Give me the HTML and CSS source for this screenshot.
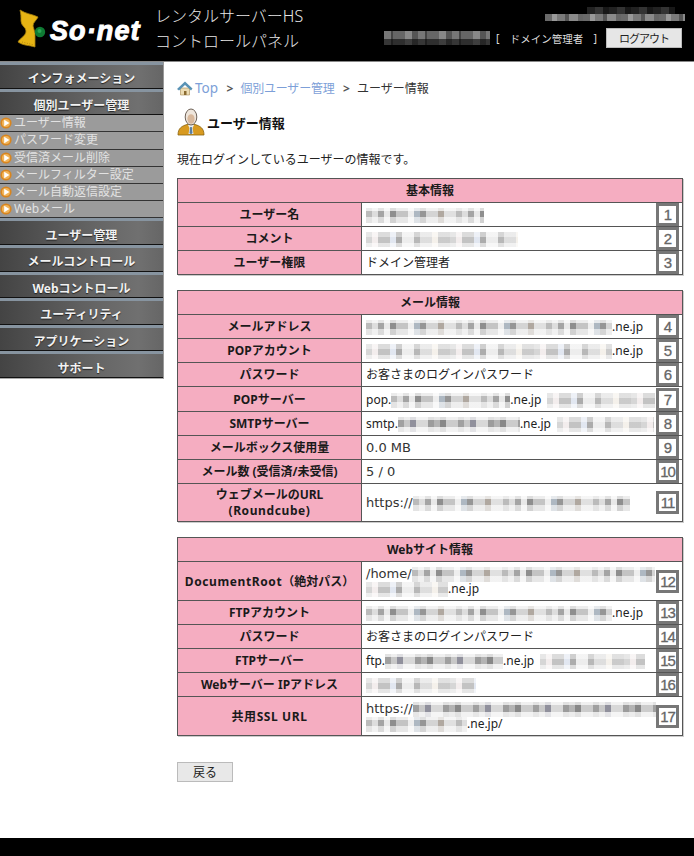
FILE: index.html
```html
<!DOCTYPE html>
<html lang="ja">
<head>
<meta charset="utf-8">
<title>ユーザー情報</title>
<link rel="stylesheet" href="styles.css">
</head>
<body>
<svg class="defs" width="0" height="0" aria-hidden="true">
  <symbol id="bullet" viewBox="0 0 12 12">
    <circle cx="6" cy="6" r="5.6" fill="#d9851e"/>
    <circle cx="6" cy="6" r="4" fill="#f0b45a"/>
    <path d="M4.2 2.8 9.400 6 4.200 9.200Z" fill="#fff"/>
  </symbol>
</svg>
<div class="page">
  <header class="header">
    <div class="logo">
      <svg class="logo-mark" width="48" height="48" viewBox="0 0 48 48">
        <path d="M3 1 C9 5 15 5 21 8 C20 11 16 13 16 17 L18 24 L18 38 C12 36 7 37 1 33 C3 29 9 27 9 22 C9 18 4 17 4 12 C4 8 4 5 3 1Z" fill="#e6b414" stroke="#a8820e" stroke-width=".8"/>
        <path d="M5 33 C9 34 13 35 17 36" fill="none" stroke="#b58a10" stroke-width="1" stroke-dasharray="1 1.500"/>
        <circle cx="23" cy="23" r="5.200" fill="#0f7a33"/>
        <circle cx="22.500" cy="22" r="2" fill="#2aa554"/>
      </svg>
      <span class="logo-text">So·net</span>
    </div>
    <div class="product">
      <div>レンタルサーバーHS</div>
      <div>コントロールパネル</div>
    </div>
    <div class="account">
      <div class="hdr-mosaic-top">
        <span class="hm hm-a"></span>
        <span class="hm hm-b"></span>
      </div>
      <div class="account-row">
        <span class="hm hm-c"></span>
        <span class="role"><span>[</span><span>ドメイン管理者</span><span>]</span></span>
        <button class="logout" type="button">ログアウト</button>
      </div>
    </div>
  </header>

  <div class="body-row">
    <nav class="sidebar">
      <a class="nav-head">インフォメーション</a>
      <a class="nav-head">個別ユーザー管理</a>
      <a class="nav-sub"><svg class="bullet"><use href="#bullet"/></svg>ユーザー情報</a>
      <a class="nav-sub"><svg class="bullet"><use href="#bullet"/></svg>パスワード変更</a>
      <a class="nav-sub"><svg class="bullet"><use href="#bullet"/></svg>受信済メール削除</a>
      <a class="nav-sub"><svg class="bullet"><use href="#bullet"/></svg>メールフィルター設定</a>
      <a class="nav-sub"><svg class="bullet"><use href="#bullet"/></svg>メール自動返信設定</a>
      <a class="nav-sub"><svg class="bullet"><use href="#bullet"/></svg>Webメール</a>
      <a class="nav-head">ユーザー管理</a>
      <a class="nav-head">メールコントロール</a>
      <a class="nav-head">Webコントロール</a>
      <a class="nav-head">ユーティリティ</a>
      <a class="nav-head">アプリケーション</a>
      <a class="nav-head">サポート</a>
    </nav>

    <main class="content">
      <div class="crumbs">
        <svg class="home" width="16" height="15" viewBox="0 0 16 15">
          <path d="M3.500 7h9v7h-9Z" fill="#ecdcb4" stroke="#a88a50" stroke-width=".6"/>
          <path d="M0 8 8 0.500 15.500 7.500 14 9.500 8 4 2 9.500Z" fill="#5a93b5"/>
          <path d="M7 10h2.500v4H7Z" fill="#8a6a30"/>
        </svg>
        <a class="crumb-link crumb-top">Top</a>
        <span class="sep">&gt;</span>
        <a class="crumb-link crumb-group">個別ユーザー管理</a>
        <span class="sep">&gt;</span>
        <span>ユーザー情報</span>
      </div>

      <div class="title-row">
        <svg width="28" height="28" viewBox="0 0 28 28">
          <path d="M1 27 C1 20 5 18 10 16.500 L18 16.500 C23 18 27 20 27 27Z" fill="#d89a20" stroke="#8a6410" stroke-width=".8"/>
          <path d="M11 17h6l-1.500 3 1 6h-5l1-6Z" fill="#e8eef2"/>
          <path d="M13.200 19h1.600l.7 6-1.500 1.500-1.500-1.500Z" fill="#5a7ea0"/>
          <ellipse cx="14" cy="9" rx="5.800" ry="8" fill="#efe6dc" stroke="#6e6258" stroke-width="1"/>
          <ellipse cx="14" cy="11" rx="3.600" ry="4.800" fill="#d8b89c"/>
        </svg>
        <h1 class="title">ユーザー情報</h1>
      </div>

      <p class="intro">現在ログインしているユーザーの情報です。</p>

      <table class="info">
        <colgroup><col class="col-label"><col></colgroup>
        <tr class="r-title"><th colspan="2">基本情報</th></tr>
        <tr class="r24"><th>ユーザー名</th><td><div class="val"><div class="txt"><span class="m m1 w118"></span></div><span class="num">1</span></div></td></tr>
        <tr class="r24"><th>コメント</th><td><div class="val"><div class="txt"><span class="m m2 w152"></span></div><span class="num">2</span></div></td></tr>
        <tr class="r24"><th>ユーザー権限</th><td><div class="val"><div class="txt">ドメイン管理者</div><span class="num">3</span></div></td></tr>
      </table>

      <table class="info">
        <colgroup><col class="col-label"><col></colgroup>
        <tr class="r-title"><th colspan="2">メール情報</th></tr>
        <tr class="r24"><th>メールアドレス</th><td><div class="val"><div class="txt"><span class="m m1 w246"></span>.ne.jp</div><span class="num">4</span></div></td></tr>
        <tr class="r24"><th>POPアカウント</th><td><div class="val"><div class="txt"><span class="m m2 w246"></span>.ne.jp</div><span class="num">5</span></div></td></tr>
        <tr class="r24"><th>パスワード</th><td><div class="val"><div class="txt">お客さまのログインパスワード</div><span class="num">6</span></div></td></tr>
        <tr class="r25"><th>POPサーバー</th><td><div class="val"><div class="txt">pop.<span class="m m1 w119"></span>.ne.jp<span class="m m2 w108 gap"></span></div><span class="num">7</span></div></td></tr>
        <tr class="r24"><th>SMTPサーバー</th><td><div class="val"><div class="txt">smtp.<span class="m m3 w122"></span>.ne.jp<span class="m m2 w97 gap"></span></div><span class="num">8</span></div></td></tr>
        <tr class="r24"><th>メールボックス使用量</th><td><div class="val"><div class="txt"><span class="wide">0.0 MB</span></div><span class="num">9</span></div></td></tr>
        <tr class="r24"><th>メール数 (受信済/未受信)</th><td><div class="val"><div class="txt"><span class="wide">5 / 0</span></div><span class="num">10</span></div></td></tr>
        <tr class="r38"><th>ウェブメールのURL<br><span class="spaced">(Roundcube)</span></th><td><div class="val"><div class="txt"><span class="wide">https://</span><span class="m m1 w217"></span></div><span class="num">11</span></div></td></tr>
      </table>

      <table class="info">
        <colgroup><col class="col-label"><col></colgroup>
        <tr class="r-title"><th colspan="2">Webサイト情報</th></tr>
        <tr class="r39"><th><span class="spaced">DocumentRoot</span>（絶対パス）</th><td><div class="val"><div class="txt"><span class="wide">/home/</span><span class="m m1 w243"></span><br><span class="m m2 w82"></span>.ne.jp</div><span class="num">12</span></div></td></tr>
        <tr class="r24"><th>FTPアカウント</th><td><div class="val"><div class="txt"><span class="m m1 w246"></span>.ne.jp</div><span class="num">13</span></div></td></tr>
        <tr class="r24"><th>パスワード</th><td><div class="val"><div class="txt">お客さまのログインパスワード</div><span class="num">14</span></div></td></tr>
        <tr class="r24"><th>FTPサーバー</th><td><div class="val"><div class="txt">ftp.<span class="m m3 w118"></span>.ne.jp<span class="m m2 w105 gap"></span></div><span class="num">15</span></div></td></tr>
        <tr class="r24"><th>Webサーバー IPアドレス</th><td><div class="val"><div class="txt"><span class="m m2 w110"></span></div><span class="num">16</span></div></td></tr>
        <tr class="r39"><th><span class="spaced">共用SSL URL</span></th><td><div class="val"><div class="txt"><span class="wide">https://</span><span class="m m3 w243"></span><br><span class="m m1 w101"></span>.ne.jp/</div><span class="num">17</span></div></td></tr>
      </table>

      <button class="back" type="button">戻る</button>
    </main>
  </div>

  <footer class="footer"></footer>
</div>
</body>
</html>
```

FILE: styles.css
```css
* { box-sizing: border-box; }
html, body { margin: 0; padding: 0; }
body {
  font-family: "Noto Sans", "Noto Sans CJK JP", sans-serif;
  font-size: 12px;
  color: #222;
  background: #fff;
}
.defs { position: absolute; }
.page { display: flex; flex-direction: column; min-height: 856px; }

/* header */
.header {
  height: 62px;
  background: #000;
  border-bottom: 1px solid #888;
  display: flex;
  flex: none;
  color: #fff;
}
.logo { width: 155px; display: flex; align-items: flex-start; padding: 9px 0 0 17px; flex: none; }
.logo-mark { flex: none; margin-right: -15px; }
.logo-text {
  font-family: "Liberation Sans", sans-serif;
  font-weight: 700;
  font-style: italic;
  font-size: 27px;
  line-height: 30px;
  letter-spacing: 1.100px;
  color: #fff;
  -webkit-text-stroke: 1px #fff;
  margin-top: 7px;
  white-space: nowrap;
}
.product { font-size: 16px; line-height: 25px; padding-top: 4px; color: #e6e6e6; font-weight: 300; }
.account { margin-left: auto; padding: 7px 12px 0 0; display: flex; flex-direction: column; align-items: flex-end; }
.hdr-mosaic-top { display: flex; flex-direction: column; align-items: flex-end; width: 140px; margin-right: -3px; }
.hm {
  display: block;
  background: repeating-linear-gradient(90deg, #6a6a6a 0 7px, #999 7px 12px, #7a7a7a 12px 20px, #555 20px 24px, #8a8a8a 24px 33px, #666 33px 38px);
}
.hm-a { width: 88px; height: 7px; background: repeating-linear-gradient(90deg, #222 0 8px, #333 8px 16px, #181818 16px 22px); margin-right: 10px; }
.hm-b { width: 140px; height: 7px; }
.hm-c { width: 106px; height: 14px; background: linear-gradient(rgba(0,0,0,0) 0 8px, rgba(0,0,0,.55) 8px), repeating-linear-gradient(90deg, #777 0 7px, #444 7px 9px, #666 9px 21px, #888 21px 28px, #555 28px 34px); }
.account-row { display: flex; align-items: center; margin-top: 7px; }
.role { display: flex; justify-content: space-between; width: 101px; font-size: 10.500px; color: #ddd; margin-left: 6px; margin-right: 9px; white-space: nowrap; }
.logout {
  width: 76px; height: 20px; margin: 0; padding: 0;
  font: 11px "Noto Sans", "Noto Sans CJK JP", sans-serif;
  letter-spacing: -1px;
  color: #222;
  background: #e6e6e6;
  border: 1px solid #bbb;
  border-radius: 0;
}

/* layout */
.body-row { display: flex; flex: none; }

/* sidebar */
.sidebar { width: 164px; flex: none; align-self: flex-start; border-right: 1px solid #999; border-bottom: 1px solid #aaa; }
.nav-head {
  display: flex;
  align-items: center;
  justify-content: center;
  height: 26.600px;
  padding: 4px 0 0;
  font-size: 12px;
  font-weight: 700;
  color: #f2f2f2;
  text-shadow: 0 1px 1px #222;
  border-top: 3px solid #8794a0;
  border-bottom: 1px solid #111;
  background: linear-gradient(90deg, #444 0, #555 30%, #666 60%, #707070 85%, #666 100%);
}
.nav-sub {
  display: flex;
  align-items: center;
  height: 17.200px;
  font-size: 12px;
  line-height: 1;
  color: #e2e2e2;
  background: #9b9b9b;
  border-bottom: 1px solid #333;
}
.bullet { width: 12px; height: 12px; margin-right: 2px; flex: none; }

/* content */
.content { flex: 1; min-width: 0; padding: 0 11px 0 13px; }
.crumbs { display: flex; align-items: center; height: 18px; margin-top: 17px; color: #333; }
.home { margin-right: 2px; flex: none; }
.crumb-link { color: #7d9fd8; }
.crumb-top { font-size: 13.500px; }
.crumb-group { letter-spacing: -.2px; }
.sep { margin: 0 7px 0 8.500px; color: #555; font-size: 12px; font-weight: 700; }
.title-row { display: flex; align-items: center; height: 28px; margin-top: 11px; }
.title { margin: 0 0 0 2px; font-size: 13px; font-weight: 700; color: #111; }
.intro { margin: 15px 0 0; height: 17px; line-height: 17px; color: #222; }

.info {
  width: 506px;
  table-layout: fixed;
  border-collapse: collapse;
  border: 1px solid #444;
  box-shadow: 1px 1px 0 #ccc;
  margin-top: 10px;
}
.info + .info { margin-top: 15px; }
.col-label { width: 184px; }
.info th, .info td { border: 1px solid #555; padding: 0; }
.info th { background: #f5adc1; font-weight: 700; font-size: 12px; line-height: 15px; color: #1a1a1a; text-align: center; }
.r-title { height: 24px; }
.r24 { height: 24px; }
.r25 { height: 25px; }
.r38 { height: 38px; }
.r38 th { line-height: 16px; }
.r39 { height: 39px; }
.spaced { letter-spacing: .6px; }
.val { display: flex; align-items: center; padding: 0 3px 0 4px; height: 100%; }
.txt { flex: 1; min-width: 0; line-height: 15px; white-space: nowrap; color: #222; }
.wide { font-family: "DejaVu Sans", sans-serif; font-size: 13px; color: #333; }
.num {
  flex: none;
  width: 23px; height: 23px;
  border: 3px solid #777;
  background: #fff;
  color: #666;
  font-family: "Liberation Sans", sans-serif;
  font-size: 15px;
  letter-spacing: -1px;
  -webkit-text-stroke: .3px #666;
  line-height: 17px;
  text-align: center;
}

/* redacted mosaic */
.m { display: inline-block; height: 15px; margin: -1px 0; vertical-align: -3px; }
.m1 {
  background:
    linear-gradient(rgba(255,255,255,.7) 0 3px, rgba(255,255,255,0) 3px 9px, rgba(255,255,255,.6) 9px),
    repeating-linear-gradient(90deg, #bbb 0 6px, #ddd 6px 12px, #a4a4a4 12px 18px, #e8e8e8 18px 24px, #8e8e8e 24px 30px, #c4c4c4 30px 42px, #eee 42px 48px, #aeb8c2 48px 54px, #969696 54px 60px, #d4d4d4 60px 72px, #b0a8a0 72px 78px, #e0e0e0 78px 90px);
}
.m2 {
  background:
    linear-gradient(rgba(255,255,255,.45) 0 5px, rgba(255,255,255,.05) 5px 11px, rgba(255,255,255,.6) 11px),
    repeating-linear-gradient(90deg, #d4d4d4 0 6px, #f2ecec 6px 12px, #c0c0c0 12px 24px, #e0e6f0 24px 30px, #a8a8a8 30px 36px, #ececec 36px 48px, #b4b4b4 48px 54px, #dcdcdc 54px 66px, #f4f0ea 66px 72px, #c8c8c8 72px 84px);
}
.m3 {
  background:
    linear-gradient(rgba(255,255,255,.7) 0 3px, rgba(255,255,255,0) 3px 10px, rgba(255,255,255,.75) 10px),
    repeating-linear-gradient(90deg, #a0a0a0 0 6px, #c8c8c8 6px 12px, #90909c 12px 18px, #d8d8d8 18px 30px, #9c9c9c 30px 36px, #b4b4b4 36px 42px, #888 42px 48px, #ccc 48px 60px);
}
.gap { margin-left: 6px; }
.w82 { width: 82px; }
.w97 { width: 97px; }
.w101 { width: 101px; }
.w105 { width: 105px; }
.w108 { width: 108px; }
.w110 { width: 110px; }
.w118 { width: 118px; }
.w119 { width: 119px; }
.w122 { width: 122px; }
.w152 { width: 152px; }
.w217 { width: 217px; }
.w243 { width: 243px; }
.w246 { width: 246px; }

.back {
  display: block;
  width: 56px; height: 20px;
  margin: 26px 0 0;
  padding: 0;
  font: 12px "Noto Sans", "Noto Sans CJK JP", sans-serif;
  color: #222;
  background: #e8e8e8;
  border: 1px solid #bbb;
  border-radius: 0;
}

.footer { margin-top: auto; height: 18px; background: #000; flex: none; }
```
